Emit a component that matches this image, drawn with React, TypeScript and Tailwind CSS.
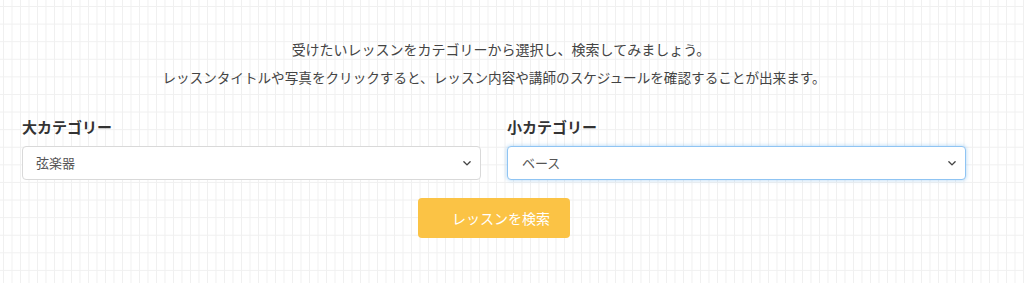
import React from "react";

function Chevron() {
  return (
    <svg width="10" height="10" viewBox="0 0 16 16" className="pointer-events-none absolute right-[9px] top-1/2 -translate-y-1/2">
      <path d="M3 6l5 5 5-5" fill="none" stroke="#444" strokeWidth="2.2" strokeLinecap="round" strokeLinejoin="round" />
    </svg>
  );
}

export default function App() {
  return (
    <div
      className="w-[1024px] h-[283px] overflow-hidden bg-white bg-[linear-gradient(to_right,#f0f0f0_1px,transparent_1px),linear-gradient(to_bottom,#f0f0f0_1px,transparent_1px)] bg-[size:8.5px_17.6px] bg-[position:3px_6px]"
      style={{ fontFamily: '"Noto Sans CJK JP", "Noto Sans", sans-serif' }}
    >
      <div className="ml-[22px] w-[944px] pt-[35px]">
        <div className="text-center leading-[28px] text-[#444]">
          <p className="pl-[14px] text-[14px]">受けたいレッスンをカテゴリーから選択し、検索してみましょう。</p>
          <p className="text-[13.6px]">レッスンタイトルや写真をクリックすると、レッスン内容や講師のスケジュールを確認することが出来ます。</p>
        </div>
        <div className="mt-[24px] flex gap-[26px]">
          <div className="flex-1">
            <div className="text-[15px] font-bold leading-[24px] text-[#333]">大カテゴリー</div>
            <div className="relative mt-[7px]">
              <div className="flex h-[34px] items-center rounded-[4px] border border-[#d9d9d9] bg-white pl-[13px] text-[13px] text-[#555]">
                弦楽器
              </div>
              <Chevron />
            </div>
          </div>
          <div className="flex-1">
            <div className="text-[15px] font-bold leading-[24px] text-[#333]">小カテゴリー</div>
            <div className="relative mt-[7px]">
              <div className="flex h-[34px] items-center rounded-[4px] border border-[#8fc4f3] bg-white pl-[14px] text-[13px] text-[#555] shadow-[0_0_4px_rgba(102,175,233,0.55)]">
                ベース
              </div>
              <Chevron />
            </div>
          </div>
        </div>
        <div className="mt-[18px] flex justify-center">
          <button className="h-[40px] w-[152px] rounded-[4px] bg-[#fbc345] pl-[14px] text-[14px] text-white">
            レッスンを検索
          </button>
        </div>
      </div>
    </div>
  );
}
